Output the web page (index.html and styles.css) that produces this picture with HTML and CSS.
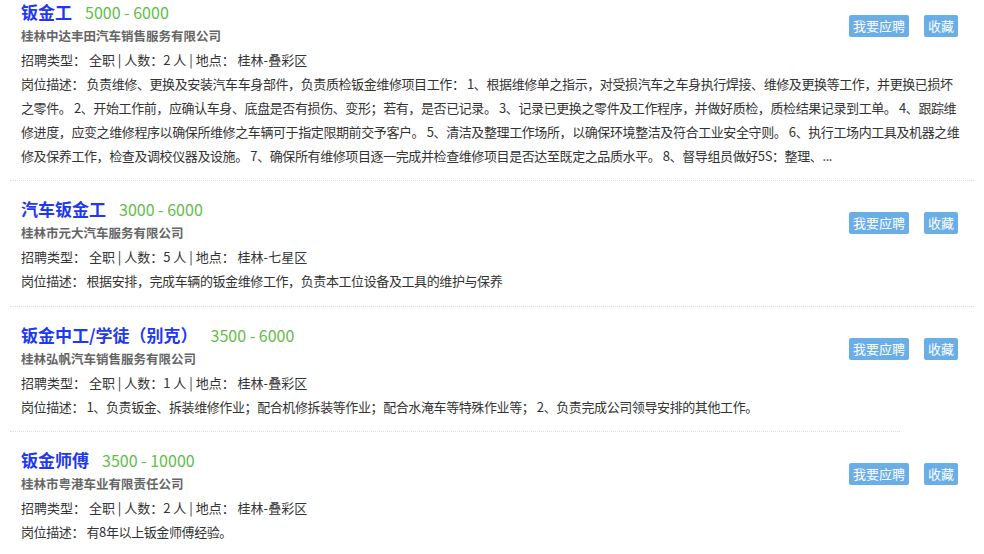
FILE: index.html
```html
<!DOCTYPE html>
<html lang="zh-CN">
<head>
    <meta charset="UTF-8">
    <meta name="viewport" content="width=device-width, initial-scale=1.0">
    <title>招聘信息 - 钣金</title>
    <link rel="stylesheet" href="styles.css">
</head>
<body>
    <div class="job-list">
        <div class="job-item first">
            <div class="job-head">
                <div class="job-main">
                    <h2 class="job-title"><a href="#">钣金工</a><span class="salary">5000 - 6000</span></h2>
                    <div class="company">桂林中达丰田汽车销售服务有限公司</div>
                    <div class="job-info">招聘类型：&nbsp;全职 | 人数：2 人 | 地点：&nbsp;桂林-叠彩区</div>
                </div>
                <div class="job-actions">
                    <a href="#" class="btn">我要应聘</a>
                    <a href="#" class="btn">收藏</a>
                </div>
            </div>
            <p class="job-desc">岗位描述：&nbsp;负责维修、更换及安装汽车车身部件，负责质检钣金维修项目工作： 1、根据维修单之指示，对受损汽车之车身执行焊接、维修及更换等工作，并更换已损坏之零件。 2、开始工作前，应确认车身、底盘是否有损伤、变形；若有，是否已记录。 3、记录已更换之零件及工作程序，并做好质检，质检结果记录到工单。 4、跟踪维修进度，应变之维修程序以确保所维修之车辆可于指定限期前交予客户。 5、清洁及整理工作场所，以确保环境整洁及符合工业安全守则。 6、执行工场内工具及机器之维修及保养工作，检查及调校仪器及设施。 7、确保所有维修项目逐一完成并检查维修项目是否达至既定之品质水平。 8、督导组员做好5S：整理、...</p>
        </div>

        <div class="job-item">
            <div class="job-head">
                <div class="job-main">
                    <h2 class="job-title"><a href="#">汽车钣金工</a><span class="salary">3000 - 6000</span></h2>
                    <div class="company">桂林市元大汽车服务有限公司</div>
                    <div class="job-info">招聘类型：&nbsp;全职 | 人数：5 人 | 地点：&nbsp;桂林-七星区</div>
                </div>
                <div class="job-actions">
                    <a href="#" class="btn">我要应聘</a>
                    <a href="#" class="btn">收藏</a>
                </div>
            </div>
            <p class="job-desc">岗位描述：&nbsp;根据安排，完成车辆的钣金维修工作，负责本工位设备及工具的维护与保养</p>
        </div>

        <div class="job-item short-line">
            <div class="job-head">
                <div class="job-main">
                    <h2 class="job-title"><a href="#">钣金中工/学徒（别克）</a><span class="salary">3500 - 6000</span></h2>
                    <div class="company">桂林弘帆汽车销售服务有限公司</div>
                    <div class="job-info">招聘类型：&nbsp;全职 | 人数：1 人 | 地点：&nbsp;桂林-叠彩区</div>
                </div>
                <div class="job-actions">
                    <a href="#" class="btn">我要应聘</a>
                    <a href="#" class="btn">收藏</a>
                </div>
            </div>
            <p class="job-desc">岗位描述：&nbsp;1、负责钣金、拆装维修作业；配合机修拆装等作业；配合水淹车等特殊作业等； 2、负责完成公司领导安排的其他工作。</p>
        </div>

        <div class="job-item">
            <div class="job-head">
                <div class="job-main">
                    <h2 class="job-title"><a href="#">钣金师傅</a><span class="salary">3500 - 10000</span></h2>
                    <div class="company">桂林市粤港车业有限责任公司</div>
                    <div class="job-info">招聘类型：&nbsp;全职 | 人数：2 人 | 地点：&nbsp;桂林-叠彩区</div>
                </div>
                <div class="job-actions">
                    <a href="#" class="btn">我要应聘</a>
                    <a href="#" class="btn">收藏</a>
                </div>
            </div>
            <p class="job-desc">岗位描述：&nbsp;有8年以上钣金师傅经验。</p>
        </div>
    </div>
</body>
</html>
```

FILE: styles.css
```css
:root {
    --title: #1f38f2;
    --salary: #5fbd4a;
    --btn: #6aaee8;
    --text: #333333;
    --company: #666666;
    --line: #dddddd;
}

* {
    margin: 0;
    padding: 0;
    box-sizing: border-box;
}

body {
    font-family: "Noto Sans CJK SC", "Microsoft YaHei", sans-serif;
    font-size: 13px;
    color: var(--text);
    background: #fff;
}

a {
    text-decoration: none;
}

.job-list {
    padding: 0 10px;
}

.job-item {
    position: relative;
    padding: 16px 14px 13px 11px;
    border-bottom: 1px dotted var(--line);
}

.job-item.first {
    padding-top: 0;
    padding-bottom: 12px;
}

/* this row's line stops short in the original */
.job-item.short-line {
    border-bottom: none;
}

.job-item.short-line::after {
    content: "";
    position: absolute;
    left: 0;
    bottom: 0;
    width: 890px;
    border-bottom: 1px dotted var(--line);
}

.job-head {
    display: flex;
    justify-content: space-between;
    align-items: flex-start;
}

.job-title {
    font-size: 17px;
    line-height: 24px;
    font-weight: bold;
}

.job-title a {
    color: var(--title);
}

.salary {
    margin-left: 13px;
    font-size: 16px;
    font-weight: normal;
    color: var(--salary);
}

.company {
    font-size: 12.5px;
    line-height: 24px;
    font-weight: bold;
    color: var(--company);
}

.job-info {
    line-height: 24px;
}

.job-actions {
    display: flex;
    gap: 15px;
    margin-top: 15px;
    margin-right: 2px;
}

.btn {
    display: block;
    height: 22px;
    line-height: 22px;
    padding: 0 4px;
    font-size: 13px;
    color: #fff;
    background-color: var(--btn);
    border-radius: 2px;
}

.job-desc {
    line-height: 24px;
    letter-spacing: -0.4px;
}
```
